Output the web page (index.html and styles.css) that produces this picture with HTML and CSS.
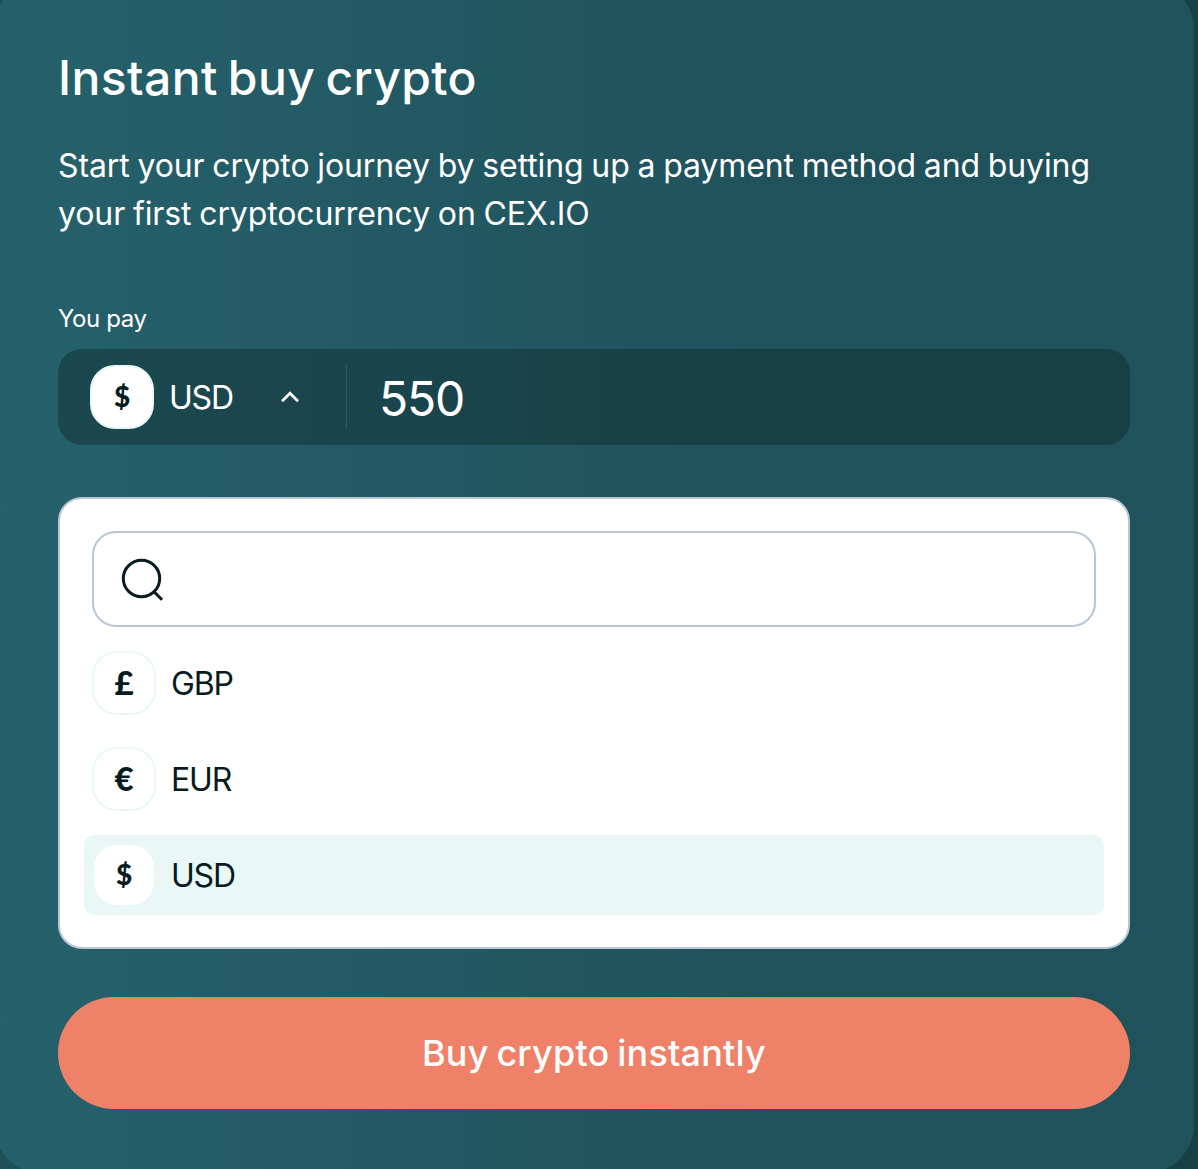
FILE: index.html
```html
<!DOCTYPE html>
<html lang="en">
<head>
    <meta charset="UTF-8">
    <meta name="viewport" content="width=device-width, initial-scale=1.0">
    <title>Instant buy crypto</title>
    <link rel="stylesheet" href="styles.css">
</head>
<body>

<div class="card">
    <h1 class="card-title">Instant buy crypto</h1>
    <p class="card-text">Start your crypto journey by setting up a payment method and buying<br>your first cryptocurrency on CEX.IO</p>

    <div class="pay-label">You pay</div>
    <div class="pay-field">
        <div class="currency-select">
            <span class="currency-icon icon-usd">$</span>
            <span class="currency-name">USD</span>
            <svg class="chevron" width="20" height="12" viewBox="0 0 20 12" fill="none">
                <path d="M2 10.2L10 2.2L18 10.2" stroke="#fff" stroke-width="2.8"/>
            </svg>
        </div>
        <div class="amount">550</div>
    </div>

    <div class="dropdown">
        <div class="search">
            <svg width="44" height="44" viewBox="0 0 44 44" fill="none" stroke="#071b20" stroke-width="3">
                <circle cx="21.5" cy="21.5" r="18.2"/>
                <path d="M33.5 34.2L42 42.7"/>
            </svg>
        </div>
        <div class="currency-option">
            <span class="currency-icon">£</span>
            <span class="currency-name">GBP</span>
        </div>
        <div class="currency-option">
            <span class="currency-icon">€</span>
            <span class="currency-name">EUR</span>
        </div>
        <div class="currency-option selected">
            <span class="currency-icon icon-usd">$</span>
            <span class="currency-name">USD</span>
        </div>
    </div>

    <button class="buy-button">Buy crypto instantly</button>
</div>

</body>
</html>
```
FILE: styles.css
```css
* {
    box-sizing: border-box;
}

body {
    margin: 0;
    height: 1169px;
    overflow: hidden;
    display: flow-root;
    background: linear-gradient(90deg, #20505a, #173f46);
    font-family: Inter, sans-serif;
    color: #fff;
}

.card {
    width: 1200px;
    height: 1192px;
    margin: -19px 0 0 -6px;
    padding: 65px 64px 0;
    border-radius: 48px;
    background: linear-gradient(90deg, #25616c 0%, #20525c 65%, #20525c 100%);
}

.card-title {
    margin: 0;
    font-size: 48px;
    font-weight: 500;
    line-height: 64px;
    letter-spacing: 0.4px;
    word-spacing: -3px;
    white-space: nowrap;
}

.card-text {
    margin: 32px 0 0;
    font-size: 32px;
    line-height: 48px;
    letter-spacing: -0.1px;
    word-spacing: -1.1px;
    white-space: nowrap;
}

.pay-label {
    margin-top: 64px;
    font-size: 24px;
    line-height: 34px;
    letter-spacing: -0.4px;
}

.pay-field {
    display: flex;
    align-items: center;
    height: 96px;
    margin-top: 13px;
    padding-left: 32px;
    border-radius: 24px;
    background: linear-gradient(90deg, #1b474f 0%, #1a444b 40%, #173f45 60%, #173f45 100%);
}

.currency-select {
    display: flex;
    align-items: center;
    width: 257px;
    height: 64px;
    border-right: 1px solid #205f68;
}

.currency-icon {
    display: flex;
    align-items: center;
    justify-content: center;
    width: 64px;
    height: 64px;
    margin-right: 15px;
    padding-bottom: 3px;
    border: 2px solid #eaf7f7;
    border-radius: 25px;
    background-color: #fff;
    color: #071b20;
    font-family: Lato, sans-serif;
    font-size: 33px;
    font-weight: 900;
}

.icon-usd {
    padding-bottom: 2px;
    font-size: 28px;
}

.currency-name {
    padding-top: 2px;
    font-size: 32px;
    line-height: 48px;
    letter-spacing: -1.2px;
}

.chevron {
    margin-left: 47px;
}

.amount {
    margin-left: 32px;
    padding-top: 3px;
    font-size: 48px;
    line-height: 64px;
    letter-spacing: -1.2px;
}

.dropdown {
    height: 452px;
    margin-top: 52px;
    padding: 32px;
    border: 2px solid #b8c7d6;
    border-radius: 24px;
    background-color: #fff;
    color: #071b20;
}

.search {
    display: flex;
    align-items: center;
    height: 96px;
    margin-bottom: 16px;
    padding-left: 26px;
    border: 2px solid #b8c7d6;
    border-radius: 24px;
}

.currency-option {
    display: flex;
    align-items: center;
    height: 80px;
    margin: 0 -8px 16px;
    padding-left: 8px;
    border-radius: 10px;
}

.selected {
    background-color: #eaf7f7;
}

.buy-button {
    display: block;
    width: 100%;
    height: 112px;
    margin-top: 48px;
    border: none;
    border-radius: 56px;
    background-color: #ef8168;
    color: #fff;
    font-family: inherit;
    font-size: 36px;
    font-weight: 500;
    letter-spacing: 0.2px;
    word-spacing: -2px;
    cursor: pointer;
}
```
